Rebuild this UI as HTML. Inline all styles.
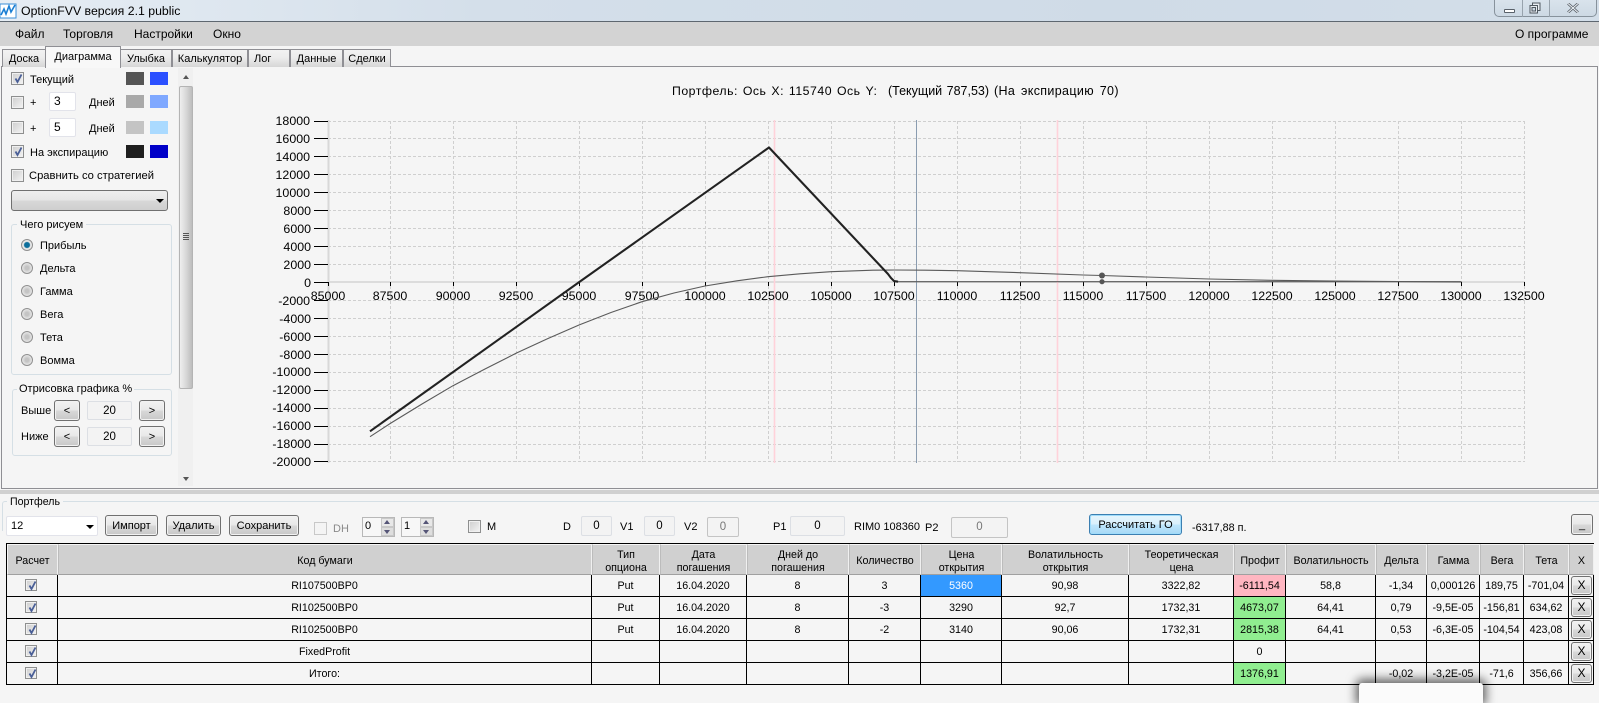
<!DOCTYPE html>
<html><head><meta charset="utf-8"><title>OptionFVV</title>
<style>
*{box-sizing:border-box}
html,body{margin:0;padding:0;width:1599px;height:686px;overflow:hidden;background:#f5f5f5;font-family:"Liberation Sans","Noto Sans CJK SC",sans-serif;font-size:11px;color:#000}
.a{position:absolute}
.t{position:absolute;white-space:nowrap;line-height:14px;height:14px}
.tab{position:absolute;top:49px;height:18px;border:1px solid #8f8f94;border-bottom:none;background:linear-gradient(#f2f2f2,#ececec 45%,#d6d6d6);text-align:center;line-height:18px;font-size:11px}
.cb{position:absolute;width:13px;height:13px;border:1px solid #8e8f8f;background:linear-gradient(135deg,#cdcdcd,#f4f4f4);box-shadow:inset 0 0 0 1px #f0f0f0}
.cb svg{position:absolute;left:1px;top:0;width:11px;height:11px}
.sw{position:absolute;width:18px;height:13px}
.inp{position:absolute;background:#fff;border:1px solid #e2e3ea;border-radius:2px;text-align:left;padding-left:4px;line-height:17px;font-size:12px}
.box{position:absolute;background:#f3f3f3;border:1px solid #dcdfe4;border-radius:2px;text-align:center;font-size:11.5px;line-height:18px}
.btn{position:absolute;border:1px solid #707070;border-radius:3px;background:linear-gradient(#f2f2f2,#e8e8e8 48%,#d8d8d8 52%,#c8c8c8);box-shadow:inset 0 0 0 1px #f2f2f2;text-align:center;font-size:11px;line-height:20px}
.rad{position:absolute;left:21px;width:12px;height:12px;border-radius:50%;border:1px solid #909090;background:radial-gradient(circle at 50% 50%,#c4c4c4 25%,#ececec 75%)}
.grp{position:absolute;border:1px solid #d5dfe5;border-radius:3px}
table{position:absolute;left:6px;top:543px;width:1588px;table-layout:fixed;border-collapse:separate;border-spacing:0;border-left:1px solid #000;border-top:1px solid #000}
th{height:31px;background:#d0d0d0;font-weight:normal;font-size:10.7px;line-height:12.5px;padding:4px 0 0;border-top:1px solid #f5f5f5;border-right:1px solid #f0f0f0;border-left:1px solid #bcbcbc;border-bottom:1px solid #a0a0a0;text-align:center;vertical-align:middle}
th:first-child{border-left:1px solid #f5f5f5}
td{height:22px;padding:0;border-right:1px solid #000;border-bottom:1px solid #000;text-align:center;vertical-align:middle;font-size:10.7px;line-height:14px;position:relative;white-space:nowrap;overflow:hidden}
td .cb{left:18px;top:4px;width:12px;height:12px}
td .btn{left:2px;top:1px;width:21px;height:19px;font-size:12px;line-height:17px}
.r{background:#ffb6c1}.g{background:#90ee90}
.sel{background:#3399ff;color:#fff}
svg text{font-family:"Liberation Sans",sans-serif;font-size:12.4px;fill:#000}
</style></head><body>
<svg width="0" height="0" style="position:absolute"><defs><symbol id="ck" viewBox="0 0 11 11"><path d="M2.5 5.5 L4.5 9 L8.5 1.5" fill="none" stroke="#4a5f97" stroke-width="1.8"/></symbol></defs></svg>

<!-- title bar -->
<div class="a" style="left:0;top:0;width:1599px;height:22px;background:linear-gradient(90deg,#e6edf4,#d4dfea 30%,#cfdbe7 70%,#d3dee9);border-bottom:1px solid #5e6770"></div>
<svg class="a" style="left:0;top:2px" width="17" height="17" viewBox="0 0 17 17"><rect x="0" y="2" width="16" height="14" fill="#fff" stroke="#3b8fd8"/><path d="M1 13 L4 7 L6 12 L9 4 L11 10 L15 3" fill="none" stroke="#1b7fd4" stroke-width="1.6"/></svg>
<div class="t" style="left:21px;top:4px;font-size:12.3px;line-height:14px">OptionFVV версия 2.1 public</div>
<div class="a" style="left:1494px;top:-1px;width:103px;height:18px;border:1px solid #87929c;border-radius:0 0 5px 5px;background:linear-gradient(#d9e3ec,#cdd9e4)"></div>
<div class="a" style="left:1522px;top:0;width:1px;height:17px;background:#98a3ad"></div>
<div class="a" style="left:1549px;top:0;width:1px;height:17px;background:#98a3ad"></div>
<div class="a" style="left:1504px;top:9px;width:11px;height:4px;border:1px solid #59616a;background:#fff;border-radius:1px"></div>
<svg class="a" style="left:1529px;top:2px" width="12" height="12" viewBox="0 0 12 12"><rect x="3.5" y="1" width="7.5" height="7.5" fill="#e8edf2" stroke="#4f5860"/><rect x="1" y="3.5" width="7.5" height="7.5" fill="#e8edf2" stroke="#4f5860"/><rect x="3" y="5.5" width="3.5" height="3.5" fill="#cdd9e4" stroke="#4f5860"/></svg>
<svg class="a" style="left:1567px;top:3px" width="12" height="10" viewBox="0 0 12 10"><path d="M1 0.5 L11 9.5 M11 0.5 L1 9.5" stroke="#59616a" stroke-width="2.6"/><path d="M1 0.5 L11 9.5 M11 0.5 L1 9.5" stroke="#f0f4f8" stroke-width="1"/></svg>

<!-- menu -->
<div class="a" style="left:0;top:22px;width:1599px;height:24px;background:#d3d3d3"></div>
<div class="t" style="left:15px;top:27px;font-size:12px">Файл</div>
<div class="t" style="left:63px;top:27px;font-size:12px">Торговля</div>
<div class="t" style="left:134px;top:27px;font-size:12px">Настройки</div>
<div class="t" style="left:213px;top:27px;font-size:12px">Окно</div>
<div class="t" style="left:1515px;top:27px;font-size:12px">О программе</div>

<!-- tab panel -->
<div class="a" style="left:1px;top:66px;width:1597px;height:423px;border:1px solid #8f8f94;background:#f5f5f5"></div>
<div class="tab" style="left:2px;width:44px">Доска</div>
<div class="tab" style="left:120px;width:52px">Улыбка</div>
<div class="tab" style="left:172px;width:76px">Калькулятор</div>
<div class="tab" style="left:248px;width:42px;text-align:left;padding-left:5px">Лог</div>
<div class="tab" style="left:290px;width:53px">Данные</div>
<div class="tab" style="left:343px;width:48px">Сделки</div>
<div class="tab" style="left:45px;top:46px;width:76px;height:22px;background:#f8f8f8;line-height:20px;z-index:2;border-color:#8f8f94">Диаграмма</div>

<!-- left controls -->
<div class="cb" style="left:11px;top:72px"><svg><use href="#ck"/></svg></div>
<div class="t" style="left:30px;top:73px">Текущий</div>
<div class="sw" style="left:126px;top:72px;background:#555"></div>
<div class="sw" style="left:150px;top:72px;background:#2b50ff"></div>

<div class="cb" style="left:11px;top:96px"></div>
<div class="t" style="left:30px;top:96px">+</div>
<div class="inp" style="left:49px;top:92px;width:27px;height:19px">3</div>
<div class="t" style="left:89px;top:96px">Дней</div>
<div class="sw" style="left:126px;top:95px;background:#a9a9a9"></div>
<div class="sw" style="left:150px;top:95px;background:#7fa8ff"></div>

<div class="cb" style="left:11px;top:121px"></div>
<div class="t" style="left:30px;top:122px">+</div>
<div class="inp" style="left:49px;top:118px;width:27px;height:19px">5</div>
<div class="t" style="left:89px;top:122px">Дней</div>
<div class="sw" style="left:126px;top:121px;background:#c4c4c4"></div>
<div class="sw" style="left:150px;top:121px;background:#aadaff"></div>

<div class="cb" style="left:11px;top:145px"><svg><use href="#ck"/></svg></div>
<div class="t" style="left:30px;top:146px">На экспирацию</div>
<div class="sw" style="left:126px;top:145px;background:#1e1e1e"></div>
<div class="sw" style="left:150px;top:145px;background:#0000c8"></div>

<div class="cb" style="left:11px;top:169px"></div>
<div class="t" style="left:29px;top:169px;font-size:11.2px">Сравнить со стратегией</div>

<div class="a" style="left:11px;top:190px;width:157px;height:21px;border:1px solid #707070;border-radius:3px;background:linear-gradient(#efefef,#e6e6e6 48%,#d8d8d8 52%,#cfcfcf)"></div>
<div class="a" style="left:156px;top:199px;width:0;height:0;border-left:4px solid transparent;border-right:4px solid transparent;border-top:4px solid #000"></div>

<div class="grp" style="left:11px;top:224px;width:161px;height:151px"></div>
<div class="t" style="left:17px;top:218px;background:#f5f5f5;padding:0 3px">Чего рисуем</div>
<div class="rad" style="top:239px;background:radial-gradient(circle,#0d6f9c 0,#0d6f9c 2.6px,#e4e4e4 3.4px,#f2f2f2)"></div>
<div class="t" style="left:40px;top:239px">Прибыль</div>
<div class="rad" style="top:262px"></div><div class="t" style="left:40px;top:262px">Дельта</div>
<div class="rad" style="top:285px"></div><div class="t" style="left:40px;top:285px">Гамма</div>
<div class="rad" style="top:308px"></div><div class="t" style="left:40px;top:308px">Вега</div>
<div class="rad" style="top:331px"></div><div class="t" style="left:40px;top:331px">Тета</div>
<div class="rad" style="top:354px"></div><div class="t" style="left:40px;top:354px">Вомма</div>

<div class="grp" style="left:12px;top:389px;width:160px;height:67px"></div>
<div class="t" style="left:17px;top:382px;background:#f5f5f5;padding:0 2px">Отрисовка графика %</div>
<div class="t" style="left:21px;top:404px">Выше</div>
<div class="btn" style="left:54px;top:400px;width:26px;height:21px">&lt;</div>
<div class="box" style="left:87px;top:401px;width:45px;height:19px">20</div>
<div class="btn" style="left:139px;top:400px;width:26px;height:21px">&gt;</div>
<div class="t" style="left:21px;top:430px">Ниже</div>
<div class="btn" style="left:54px;top:426px;width:26px;height:21px">&lt;</div>
<div class="box" style="left:87px;top:427px;width:45px;height:19px">20</div>
<div class="btn" style="left:139px;top:426px;width:26px;height:21px">&gt;</div>

<!-- scrollbar -->
<div class="a" style="left:178px;top:68px;width:15px;height:418px;background:#f0f0f0"></div>
<div class="a" style="left:183px;top:75px;width:0;height:0;border-left:3.5px solid transparent;border-right:3.5px solid transparent;border-bottom:4px solid #555"></div>
<div class="a" style="left:179px;top:86px;width:14px;height:303px;border:1px solid #b4b4b4;border-radius:2px;background:linear-gradient(90deg,#efefef,#d8d8d8 50%,#bdbdbd)"></div>
<div class="a" style="left:183px;top:233px;width:6px;height:1px;background:#555;box-shadow:0 2px 0 #555,0 4px 0 #555,0 6px 0 #555"></div>
<div class="a" style="left:183px;top:477px;width:0;height:0;border-left:3.5px solid transparent;border-right:3.5px solid transparent;border-top:4px solid #555"></div>

<!-- chart -->
<div class="t" style="left:672px;top:84px;font-size:12.3px;word-spacing:1px;letter-spacing:.5px">Портфель: Ось X: 115740 Ось Y:</div>
<div class="t" style="left:888px;top:84px;font-size:12.5px;word-spacing:1px">(Текущий 787,53)</div>
<div class="t" style="left:994px;top:84px;font-size:12.5px;word-spacing:2px;letter-spacing:.35px">(На экспирацию 70)</div>
<svg class="a" style="left:0;top:0" width="1599" height="486" viewBox="0 0 1599 486">
<path fill="none" stroke="#cfcfcf" stroke-dasharray="3 2" d="M390.5 121V462M453.5 121V462M516.5 121V462M579.5 121V462M642.5 121V462M705.5 121V462M768.5 121V462M831.5 121V462M894.5 121V462M957.5 121V462M1020.5 121V462M1083.5 121V462M1146.5 121V462M1209.5 121V462M1272.5 121V462M1335.5 121V462M1398.5 121V462M1461.5 121V462M1524.5 121V462M328 121.5H1525M328 138.5H1525M328 156.5H1525M328 174.5H1525M328 192.5H1525M328 210.5H1525M328 228.5H1525M328 246.5H1525M328 264.5H1525M328 300.5H1525M328 318.5H1525M328 336.5H1525M328 354.5H1525M328 372.5H1525M328 390.5H1525M328 408.5H1525M328 426.5H1525M328 444.5H1525M328 461.5H1525"/>
<path d="M328.5 120V463" stroke="#d8d8d8" stroke-width="2"/>
<path d="M328 282H1525" stroke="#dcdcdc" stroke-width="2"/>
<path d="M774.5 120V463M1057.5 120V463" stroke="#ffd2da" stroke-width="1.6"/>
<path d="M916.5 120V463" stroke="#8a9cb0" stroke-width="1"/>
<path stroke="#000" stroke-width="1" d="M314 121.5H328M314 138.5H328M314 156.5H328M314 174.5H328M314 192.5H328M314 210.5H328M314 228.5H328M314 246.5H328M314 264.5H328M314 282.5H328M314 300.5H328M314 318.5H328M314 336.5H328M314 354.5H328M314 372.5H328M314 390.5H328M314 408.5H328M314 426.5H328M314 444.5H328M314 461.5H328M328.5 282V286M390.5 282V286M453.5 282V286M516.5 282V286M579.5 282V286M642.5 282V286M705.5 282V286M768.5 282V286M831.5 282V286M894.5 282V286M957.5 282V286M1020.5 282V286M1083.5 282V286M1146.5 282V286M1209.5 282V286M1272.5 282V286M1335.5 282V286M1398.5 282V286M1461.5 282V286M1524.5 282V286"/>
<g text-anchor="end">
<text x="310" y="125">18000</text><text x="310" y="143">16000</text><text x="310" y="161">14000</text><text x="310" y="179">12000</text><text x="310" y="197">10000</text><text x="311" y="215">8000</text><text x="311" y="233">6000</text><text x="311" y="251">4000</text><text x="311" y="269">2000</text><text x="311" y="287">0</text><text x="310" y="305">-2000</text><text x="311" y="323">-4000</text><text x="311" y="341">-6000</text><text x="311" y="359">-8000</text><text x="311" y="376">-10000</text><text x="311" y="394">-12000</text><text x="311" y="412">-14000</text><text x="311" y="430">-16000</text><text x="311" y="448">-18000</text><text x="311" y="466">-20000</text>
</g>
<g text-anchor="middle">
<text x="328" y="300">85000</text><text x="390" y="300">87500</text><text x="453" y="300">90000</text><text x="516" y="300">92500</text><text x="579" y="300">95000</text><text x="642" y="300">97500</text><text x="705" y="300">100000</text><text x="768" y="300">102500</text><text x="831" y="300">105000</text><text x="894" y="300">107500</text><text x="957" y="300">110000</text><text x="1020" y="300">112500</text><text x="1083" y="300">115000</text><text x="1146" y="300">117500</text><text x="1209" y="300">120000</text><text x="1272" y="300">122500</text><text x="1335" y="300">125000</text><text x="1398" y="300">127500</text><text x="1461" y="300">130000</text><text x="1524" y="300">132500</text>
</g>
<polyline fill="none" stroke="#5a5a5a" stroke-width="1.1" points="370,436.7 391,423 422,404 453,385.7 485,369 516,353.3 548,338.5 579,325 611,312.5 642,301.7 674,293 705,286 737,280.8 768,276.7 800,273.8 831,271.7 873,270.2 894,270 925,270.2 957,270.7 1020,272.7 1083,275 1102,275.5 1146,277 1209,279 1272,280.3 1335,281 1398,281.5 1461,282"/>
<path d="M894 281.7H1461.5" stroke="#5a5a5a" stroke-width="1.2"/>
<polyline fill="none" stroke="#222" stroke-width="2.1" stroke-linejoin="round" points="370,431.3 579.3,282 769,147.5 888,274 891,278 894,281 898,281.7"/>
<circle cx="1102" cy="275.5" r="3" fill="#555"/>
<circle cx="1102" cy="281.7" r="2.6" fill="#555"/>
</svg>

<!-- splitter -->
<div class="a" style="left:0;top:490px;width:1599px;height:4px;background:#d0d0d0"></div>

<!-- portfolio -->
<div class="a" style="left:2px;top:501px;width:1597px;height:30px;border-top:1px solid #d5dfe5;border-left:1px solid #d5dfe5;border-radius:3px 0 0 0"></div>
<div class="t" style="left:7px;top:495px;background:#f5f5f5;padding:0 3px;font-size:10.6px">Портфель</div>

<div class="a" style="left:6px;top:516px;width:92px;height:20px;background:#fff;border:1px solid #e2e3ea;border-radius:2px;padding-left:4px;line-height:18px;font-size:11px">12</div>
<div class="a" style="left:86px;top:525px;width:0;height:0;border-left:4px solid transparent;border-right:4px solid transparent;border-top:4px solid #000"></div>
<div class="btn" style="left:105px;top:515px;width:53px;height:21px">Импорт</div>
<div class="btn" style="left:166px;top:515px;width:55px;height:21px">Удалить</div>
<div class="btn" style="left:229px;top:515px;width:70px;height:21px">Сохранить</div>
<div class="cb" style="left:314px;top:522px;border-color:#c8c8c8;background:#f4f4f4;box-shadow:none"></div>
<div class="t" style="left:333px;top:522px;color:#8a8a8a;font-size:11px">DH</div>

<div class="a" style="left:362px;top:517px;width:33px;height:20px;border:1px solid #b8b8b8;background:#f7f7f7;padding-left:2px;line-height:17px;font-size:11px">0</div>
<div class="a" style="left:381px;top:518px;width:13px;height:9px;border:1px solid #c8c8c8;background:#e8e8e8"></div>
<div class="a" style="left:381px;top:527px;width:13px;height:9px;border:1px solid #c8c8c8;background:#dedede"></div>
<div class="a" style="left:384px;top:520px;border-left:3.5px solid transparent;border-right:3.5px solid transparent;border-bottom:4px solid #557"></div>
<div class="a" style="left:384px;top:530px;border-left:3.5px solid transparent;border-right:3.5px solid transparent;border-top:4px solid #557"></div>
<div class="a" style="left:401px;top:517px;width:33px;height:20px;border:1px solid #b8b8b8;background:#f7f7f7;padding-left:2px;line-height:17px;font-size:11px">1</div>
<div class="a" style="left:420px;top:518px;width:13px;height:9px;border:1px solid #c8c8c8;background:#e8e8e8"></div>
<div class="a" style="left:420px;top:527px;width:13px;height:9px;border:1px solid #c8c8c8;background:#dedede"></div>
<div class="a" style="left:423px;top:520px;border-left:3.5px solid transparent;border-right:3.5px solid transparent;border-bottom:4px solid #557"></div>
<div class="a" style="left:423px;top:530px;border-left:3.5px solid transparent;border-right:3.5px solid transparent;border-top:4px solid #557"></div>

<div class="cb" style="left:468px;top:520px"></div>
<div class="t" style="left:487px;top:520px;font-size:11px">M</div>

<div class="t" style="left:563px;top:520px;font-size:11px">D</div>
<div class="box" style="left:581px;top:516px;width:31px;height:20px">0</div>
<div class="t" style="left:620px;top:520px;font-size:11px">V1</div>
<div class="box" style="left:644px;top:516px;width:31px;height:20px">0</div>
<div class="t" style="left:684px;top:520px;font-size:11px">V2</div>
<div class="box" style="left:707px;top:517px;width:32px;height:20px;color:#777;border-color:#c4c4c4">0</div>
<div class="t" style="left:773px;top:520px;font-size:11px">P1</div>
<div class="box" style="left:790px;top:516px;width:55px;height:20px">0</div>
<div class="t" style="left:854px;top:520px;font-size:11px">RIM0 108360</div>
<div class="t" style="left:925px;top:521px;font-size:11px">P2</div>
<div class="box" style="left:951px;top:517px;width:57px;height:21px;color:#777;border-color:#c4c4c4;line-height:19px">0</div>

<div class="btn" style="left:1089px;top:514px;width:93px;height:21px;border-color:#3c7fb1;background:linear-gradient(#e6f5fc,#d9f0fc 48%,#bee6fd 52%,#a7d9f5);box-shadow:inset 0 0 0 1px #9fdcfb;font-size:11px">Рассчитать ГО</div>
<div class="t" style="left:1192px;top:521px;font-size:10.8px">-6317,88 п.</div>
<div class="btn" style="left:1571px;top:514px;width:22px;height:21px;line-height:21px">_</div>

<table>
<colgroup><col style="width:51px"><col style="width:534px"><col style="width:68px"><col style="width:87px"><col style="width:102px"><col style="width:72px"><col style="width:81px"><col style="width:127px"><col style="width:105px"><col style="width:52px"><col style="width:90px"><col style="width:51px"><col style="width:53px"><col style="width:44px"><col style="width:45px"><col style="width:25px"></colgroup>
<tr><th>Расчет</th><th>Код бумаги</th><th>Тип<br>опциона</th><th>Дата<br>погашения</th><th>Дней до<br>погашения</th><th>Количество</th><th>Цена<br>открытия</th><th>Волатильность<br>открытия</th><th>Теоретическая<br>цена</th><th>Профит</th><th>Волатильность</th><th>Дельта</th><th>Гамма</th><th>Вега</th><th>Тета</th><th>X</th></tr>
<tr><td><div class="cb"><svg><use href="#ck"/></svg></div></td><td>RI107500BP0</td><td>Put</td><td>16.04.2020</td><td>8</td><td>3</td><td class="sel">5360</td><td>90,98</td><td>3322,82</td><td class="r">-6111,54</td><td>58,8</td><td>-1,34</td><td>0,000126</td><td>189,75</td><td>-701,04</td><td><div class="btn">X</div></td></tr>
<tr><td><div class="cb"><svg><use href="#ck"/></svg></div></td><td>RI102500BP0</td><td>Put</td><td>16.04.2020</td><td>8</td><td>-3</td><td>3290</td><td>92,7</td><td>1732,31</td><td class="g">4673,07</td><td>64,41</td><td>0,79</td><td>-9,5E-05</td><td>-156,81</td><td>634,62</td><td><div class="btn">X</div></td></tr>
<tr><td><div class="cb"><svg><use href="#ck"/></svg></div></td><td>RI102500BP0</td><td>Put</td><td>16.04.2020</td><td>8</td><td>-2</td><td>3140</td><td>90,06</td><td>1732,31</td><td class="g">2815,38</td><td>64,41</td><td>0,53</td><td>-6,3E-05</td><td>-104,54</td><td>423,08</td><td><div class="btn">X</div></td></tr>
<tr><td><div class="cb"><svg><use href="#ck"/></svg></div></td><td>FixedProfit</td><td></td><td></td><td></td><td></td><td></td><td></td><td></td><td>0</td><td></td><td></td><td></td><td></td><td></td><td><div class="btn">X</div></td></tr>
<tr><td><div class="cb"><svg><use href="#ck"/></svg></div></td><td>Итого:</td><td></td><td></td><td></td><td></td><td></td><td></td><td></td><td class="g">1376,91</td><td></td><td>-0,02</td><td>-3,2E-05</td><td>-71,6</td><td>356,66</td><td><div class="btn">X</div></td></tr>
</table>

<div class="a" style="left:1359px;top:683px;width:124px;height:20px;background:#fbfbfb;border-radius:3px 3px 0 0;box-shadow:0 -1px 10px 3px rgba(0,0,0,.6)"></div>
</body></html>
